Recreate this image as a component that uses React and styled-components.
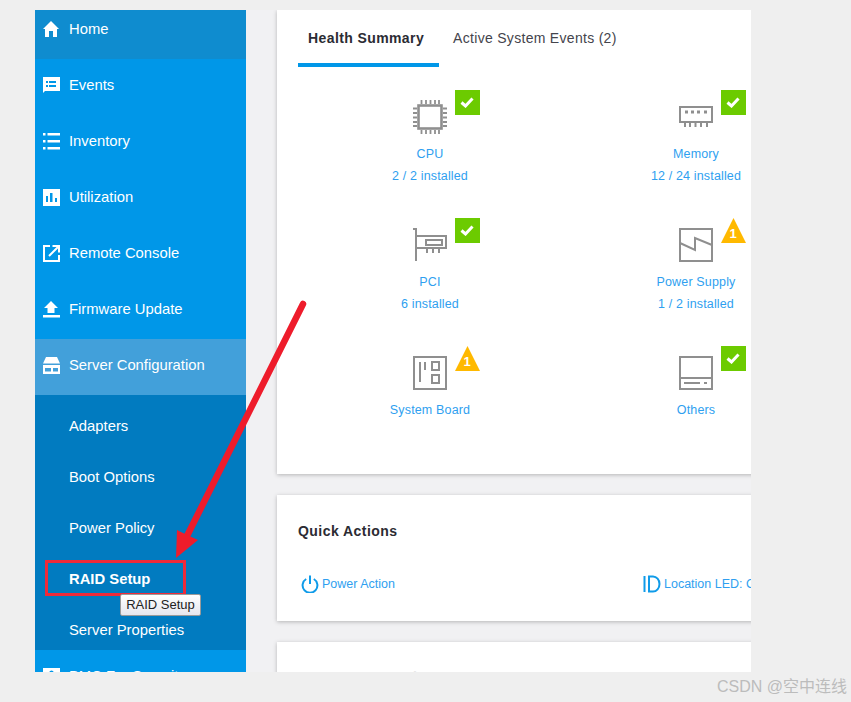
import React from 'react';
import styled, { createGlobalStyle } from 'styled-components';

const SANS = '"Liberation Sans", Arial, sans-serif';

const GlobalStyle = createGlobalStyle`
  html, body {
    margin: 0;
    padding: 0;
    background: #efefef;
    font-family: ${SANS};
  }
`;

const HomeIcon = () => (
  <svg width="18" height="18" viewBox="0 0 18 18" fill="#fff">
    <path d="M9 1 L17 9 H15 V17 H11 V11 H7 V17 H3 V9 H1 Z" />
  </svg>
);

const EventsIcon = () => (
  <svg width="18" height="18" viewBox="0 0 18 18" fill="#fff">
    <path d="M1 1 H18 V15 H3 L1 17 Z M4 5 V7 H6 V5 Z M7 5 V7 H14 V5 Z M4 9 V11 H6 V9 Z M7 9 V11 H14 V9 Z" fillRule="evenodd" />
  </svg>
);

const ListIcon = () => (
  <svg width="18" height="18" viewBox="0 0 18 18" fill="#fff">
    <path d="M1 1 H3.5 V3.5 H1 Z M5.5 1 H18 V3.5 H5.5 Z M1 8 H3.5 V10.5 H1 Z M5.5 8 H18 V10.5 H5.5 Z M1 15 H3.5 V17.5 H1 Z M5.5 15 H18 V17.5 H5.5 Z" />
  </svg>
);

const ChartIcon = () => (
  <svg width="18" height="18" viewBox="0 0 18 18" fill="#fff">
    <path d="M1 1 H18 V18 H1 Z M4 8 V14 H6 V8 Z M8 5 V14 H10.5 V5 Z M13 10 V14 H15 V10 Z" fillRule="evenodd" />
  </svg>
);

const ConsoleIcon = () => (
  <svg width="18" height="18" viewBox="0 0 18 18" fill="none" stroke="#fff" strokeWidth="2">
    <path d="M8 2 H2 V17 H17 V11" />
    <path d="M7 12 L16 3 M10.5 2 H17 V8.5" />
  </svg>
);

const UploadIcon = () => (
  <svg width="18" height="18" viewBox="0 0 18 18" fill="#fff">
    <path d="M9 1 L16 8 H12.5 V13 H5.5 V8 H2 Z M1 15 H18 V17.5 H1 Z" />
  </svg>
);

const ServerIcon = () => (
  <svg width="18" height="18" viewBox="0 0 18 18" fill="#fff">
    <path d="M4 1 H15 L18 7.5 H1 Z" />
    <path d="M1 9 H18 V18 H1 Z M3 12 V15.5 H9 V12 Z M11 12 V15.5 H16 V12 Z" fillRule="evenodd" />
  </svg>
);

const BmcIcon = () => (
  <svg width="18" height="18" viewBox="0 0 18 18" fill="#fff">
    <path d="M1 1 H18 V18 H1 Z M9.5 3.5 A2.2 2.2 0 1 0 9.5 8 A2.2 2.2 0 1 0 9.5 3.5 Z M4.5 15 H14.5 V12 L12 9.5 H7 L4.5 12 Z" fillRule="evenodd" />
  </svg>
);

const CpuIcon = () => (
  <svg width="34" height="34" viewBox="0 0 34 34" fill="none" stroke="#8f8f8f">
    <rect x="5.5" y="5.5" width="23" height="23" strokeWidth="2.6" />
    <path d="M8.5 0 V4 M13 0 V4 M17.5 0 V4 M22 0 V4 M26 0 V4 M8.5 30 V34 M13 30 V34 M17.5 30 V34 M22 30 V34 M26 30 V34 M0 8.5 H4 M0 13 H4 M0 17.5 H4 M0 22 H4 M0 26 H4 M30 8.5 H34 M30 13 H34 M30 17.5 H34 M30 22 H34 M30 26 H34" strokeWidth="1.8" />
  </svg>
);

const MemoryIcon = () => (
  <svg width="34" height="22" viewBox="0 0 34 22" fill="none" stroke="#8f8f8f">
    <rect x="1" y="1" width="32" height="15" strokeWidth="2" />
    <path d="M6 6 H9 M12 6 H15 M18 6 H21 M25 6 H28" strokeWidth="3" />
    <path d="M6 16 V21 M11 16 V21 M16.5 16 V21 M22 16 V21 M28 16 V21" strokeWidth="2" />
  </svg>
);

const PciIcon = () => (
  <svg width="34" height="34" viewBox="0 0 34 34" fill="none" stroke="#8f8f8f" strokeWidth="2">
    <path d="M0 1 H3 V33" />
    <path d="M3 8 H33 V20 H3" />
    <rect x="13" y="12" width="16" height="5" />
    <path d="M14 20 V25 M20 20 V25 M26 20 V25" />
  </svg>
);

const PowerSupplyIcon = () => (
  <svg width="34" height="34" viewBox="0 0 34 34" fill="none" stroke="#8f8f8f" strokeWidth="2">
    <rect x="1" y="1" width="32" height="32" />
    <path d="M1 15 L16 22 V10 L33 17" />
  </svg>
);

const BoardIcon = () => (
  <svg width="34" height="34" viewBox="0 0 34 34" fill="none" stroke="#8f8f8f" strokeWidth="2">
    <rect x="1" y="1" width="32" height="32" />
    <path d="M7 6 V26 M12 6 V14" />
    <rect x="19" y="6" width="7" height="8" />
    <rect x="19" y="19" width="7" height="8" />
  </svg>
);

const OthersIcon = () => (
  <svg width="34" height="34" viewBox="0 0 34 34" fill="none" stroke="#8f8f8f" strokeWidth="2">
    <rect x="1" y="1" width="32" height="32" />
    <path d="M1 22 H33" />
    <path d="M5 27 H21 M25 27 H28" />
  </svg>
);

const PowerIcon = () => (
  <svg width="18" height="18" viewBox="0 0 18 18" fill="none" stroke="#0f9be9" strokeWidth="2">
    <path d="M5.2 4 A7.4 7.4 0 1 0 12.8 4" />
    <path d="M9 0.5 V9" />
  </svg>
);

const LedIcon = () => (
  <svg width="18" height="18" viewBox="0 0 18 18" fill="none" stroke="#0f9be9" strokeWidth="2">
    <path d="M1.5 1 V17" />
    <path d="M6 1.5 H10 A6.5 7.5 0 0 1 10 16.5 H6 Z" />
  </svg>
);

const navItems = [
  { label: 'Home', icon: <HomeIcon />, variant: 'current' },
  { label: 'Events', icon: <EventsIcon /> },
  { label: 'Inventory', icon: <ListIcon /> },
  { label: 'Utilization', icon: <ChartIcon /> },
  { label: 'Remote Console', icon: <ConsoleIcon /> },
  { label: 'Firmware Update', icon: <UploadIcon /> },
  { label: 'Server Configuration', icon: <ServerIcon />, variant: 'open' },
];

const subItems = ['Adapters', 'Boot Options', 'Power Policy', 'RAID Setup', 'Server Properties'];

const healthItems = [
  { name: 'CPU', detail: '2 / 2 installed', icon: <CpuIcon />, warn: false },
  { name: 'Memory', detail: '12 / 24 installed', icon: <MemoryIcon />, warn: false },
  { name: 'PCI', detail: '6 installed', icon: <PciIcon />, warn: false },
  { name: 'Power Supply', detail: '1 / 2 installed', icon: <PowerSupplyIcon />, warn: true },
  { name: 'System Board', icon: <BoardIcon />, warn: true },
  { name: 'Others', icon: <OthersIcon />, warn: false },
];

const App = () => (
  <>
    <GlobalStyle />
    <Page>
      <Frame>
        <Sidebar>
          {navItems.map((item) => (
            <NavItem key={item.label} $variant={item.variant}>
              <NavIcon>{item.icon}</NavIcon>
              {item.label}
            </NavItem>
          ))}
          <SubList>
            {subItems.map((label) => (
              <SubItem key={label} $active={label === 'RAID Setup'}>
                {label}
                {label === 'RAID Setup' && (
                  <>
                    <Highlight />
                    <Tooltip>RAID Setup</Tooltip>
                  </>
                )}
              </SubItem>
            ))}
          </SubList>
          <NavItem>
            <NavIcon><BmcIcon /></NavIcon>
            BMC For Security
          </NavItem>
        </Sidebar>
        <Main>
          <SummaryCard>
            <Tabs>
              <Tab $active>Health Summary</Tab>
              <Tab>Active System Events (2)</Tab>
            </Tabs>
            <HealthGrid>
              {healthItems.map((item) => (
                <HealthCell key={item.name}>
                  <IconSlot>
                    {item.icon}
                    {item.warn ? (
                      <WarnBadge>
                        <svg width="25" height="25" viewBox="0 0 25 25">
                          <path d="M12.5 0 L25 25 H0 Z" fill="#ffb900" />
                        </svg>
                        <WarnCount>1</WarnCount>
                      </WarnBadge>
                    ) : (
                      <OkBadge>
                        <svg width="14" height="11" viewBox="0 0 14 11" fill="none" stroke="#fff" strokeWidth="3">
                          <path d="M1.5 5.5 L5.5 9 L12.5 1.5" />
                        </svg>
                      </OkBadge>
                    )}
                  </IconSlot>
                  <HealthText>{item.name}</HealthText>
                  {item.detail && <HealthText>{item.detail}</HealthText>}
                </HealthCell>
              ))}
            </HealthGrid>
          </SummaryCard>
          <ActionsCard>
            <CardTitle>Quick Actions</CardTitle>
            <ActionRow>
              <Action>
                <PowerIcon />
                Power Action
              </Action>
              <Action>
                <LedIcon />
                Location LED: Off
              </Action>
            </ActionRow>
          </ActionsCard>
          <FadedCard>
            <FadedTitle>Power Consumption</FadedTitle>
          </FadedCard>
        </Main>
      </Frame>
      <Watermark>CSDN @空中连线</Watermark>
      <Arrow width="851" height="702" viewBox="0 0 851 702">
        <path d="M303 304 L186 538" stroke="#ee1c2b" strokeWidth="6.5" strokeLinecap="round" fill="none" />
        <path d="M176 558 L177 530 L187 535 L198 540 Z" fill="#ee1c2b" />
      </Arrow>
    </Page>
  </>
);

const Page = styled.div`
  position: relative;
  width: 851px;
  height: 702px;
  padding: 10px 0 0 35px;
  box-sizing: border-box;
  overflow: hidden;
  background: #efefef;
`;

const Frame = styled.div`
  display: flex;
  width: 716px;
  height: 662px;
  overflow: hidden;
  background: #f1f1f3;
`;

const Sidebar = styled.nav`
  flex: 0 0 211px;
  margin-top: -7px;
  background: #0097e8;
`;

const NavItem = styled.div`
  display: flex;
  align-items: center;
  gap: 9px;
  height: 56px;
  box-sizing: border-box;
  padding: 0 0 4px 7px;
  color: #fff;
  font-size: 14.8px;
  background: ${(p) =>
    p.$variant === 'current' ? '#0f8ccf' : p.$variant === 'open' ? '#42a0da' : '#0097e8'};
`;

const NavIcon = styled.span`
  display: flex;
  width: 18px;
  height: 18px;
  flex: none;
`;

const SubList = styled.div`
  box-sizing: border-box;
  height: 255px;
  padding-top: 6px;
  background: #017bc0;
`;

const SubItem = styled.div`
  position: relative;
  height: 51px;
  line-height: 51px;
  padding-left: 34px;
  color: #fff;
  font-size: 14.8px;
  font-weight: ${(p) => (p.$active ? 700 : 400)};
`;

const Highlight = styled.div`
  position: absolute;
  left: 10px;
  top: 6px;
  width: 141px;
  height: 36px;
  box-sizing: border-box;
  border: 3px solid #ee2a3a;
`;

const Tooltip = styled.div`
  position: absolute;
  left: 85px;
  top: 40px;
  width: 81px;
  height: 22px;
  box-sizing: border-box;
  border: 1px solid #9a9a9a;
  border-radius: 2px;
  background: linear-gradient(#ffffff, #e6e6ee);
  color: #222;
  font-size: 13px;
  font-weight: 400;
  line-height: 20px;
  text-align: center;
  z-index: 2;
`;

const Main = styled.main`
  flex: 1;
  min-width: 0;
  padding-left: 31px;
`;

const Card = styled.section`
  width: 574px;
  box-sizing: border-box;
  background: #fff;
  box-shadow: 0 1px 4px rgba(0, 0, 0, 0.25);
`;

const SummaryCard = styled(Card)`
  height: 464px;
  padding: 0 21px;
`;

const Tabs = styled.div`
  display: flex;
  gap: 14px;
  height: 57px;
`;

const Tab = styled.div`
  box-sizing: border-box;
  height: 57px;
  padding: 20px 15px 0 10px;
  font-size: 14px;
  line-height: 17px;
  color: ${(p) => (p.$active ? '#2b2b33' : '#44444c')};
  font-weight: ${(p) => (p.$active ? 700 : 400)};
  letter-spacing: ${(p) => (p.$active ? '0.4px' : '0.3px')};
  border-bottom: 4px solid ${(p) => (p.$active ? '#0097e8' : 'transparent')};
  ${(p) => !p.$active && 'padding-left: 0;'}
`;

const HealthGrid = styled.div`
  display: grid;
  grid-template-columns: 266px 266px;
  grid-auto-rows: 128px;
  margin-left: -1px;
  padding-top: 23px;
`;

const HealthCell = styled.div`
  display: flex;
  flex-direction: column;
  align-items: center;
`;

const IconSlot = styled.div`
  position: relative;
  display: flex;
  align-items: center;
  justify-content: center;
  width: 34px;
  height: 53px;
`;

const OkBadge = styled.div`
  position: absolute;
  left: 41.5px;
  top: 0;
  display: flex;
  align-items: center;
  justify-content: center;
  width: 25px;
  height: 25px;
  background: #6ccb00;
`;

const WarnBadge = styled.div`
  position: absolute;
  left: 41.5px;
  top: 0;
  width: 25px;
  height: 25px;
`;

const WarnCount = styled.span`
  position: absolute;
  left: 0;
  right: 0;
  top: 8px;
  text-align: center;
  color: #fff;
  font-size: 13px;
  font-weight: 700;
  line-height: 16px;
`;

const HealthText = styled.div`
  height: 22px;
  line-height: 22px;
  font-size: 12.5px;
  letter-spacing: 0.15px;
  color: #2f9ff0;
  white-space: nowrap;
`;

const ActionsCard = styled(Card)`
  height: 126px;
  margin-top: 21px;
  padding: 0 21px;
`;

const CardTitle = styled.h3`
  margin: 0;
  padding-top: 28px;
  font-size: 14px;
  line-height: 17px;
  font-weight: 700;
  letter-spacing: 0.45px;
  color: #2b2b33;
`;

const ActionRow = styled.div`
  display: grid;
  grid-template-columns: 342px auto;
  padding: 35px 0 0 3px;
`;

const Action = styled.div`
  display: flex;
  align-items: center;
  gap: 3px;
  font-size: 12.5px;
  color: #2f9ff0;
  white-space: nowrap;
`;

const FadedCard = styled(Card)`
  height: 60px;
  margin-top: 21px;
  padding: 27px 21px 0;
`;

const FadedTitle = styled.h3`
  margin: 0;
  font-size: 14px;
  line-height: 17px;
  color: #e8e8e8;
`;

const Watermark = styled.div`
  margin-top: 6px;
  padding-right: 4px;
  margin-left: -35px;
  text-align: right;
  font-family: ${SANS}, "Noto Sans CJK SC", sans-serif;
  font-size: 16px;
  line-height: 18px;
  color: #bcbcbc;
`;

const Arrow = styled.svg`
  position: absolute;
  left: 0;
  top: 0;
  pointer-events: none;
`;

export default App;
